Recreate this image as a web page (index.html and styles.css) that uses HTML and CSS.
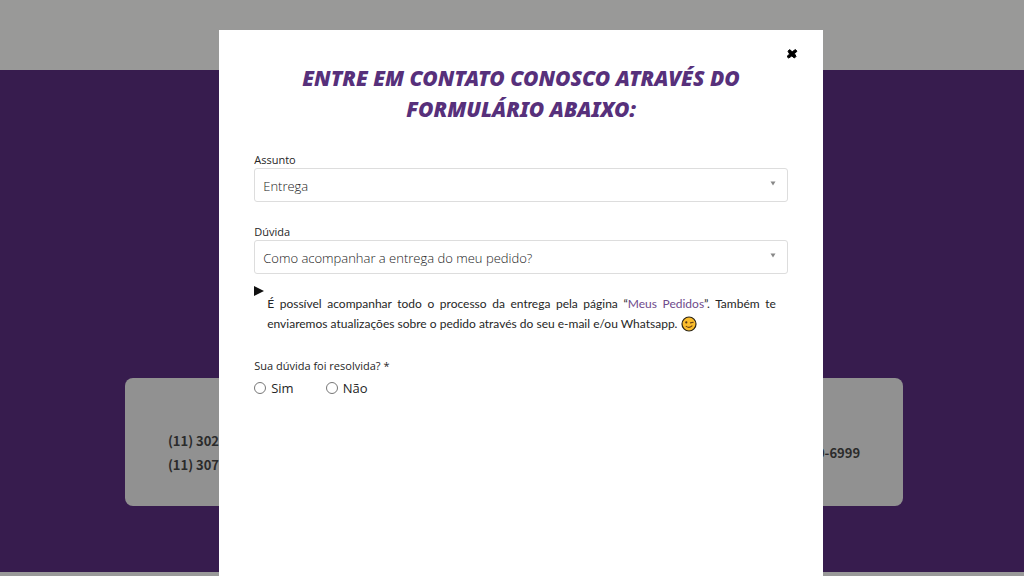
FILE: index.html
```html
<!DOCTYPE html>
<html lang="pt-BR">
<head>
<meta charset="utf-8">
<meta name="viewport" content="width=device-width, initial-scale=1">
<title>Fale conosco</title>
<link rel="stylesheet" href="styles.css">
</head>
<body>
<div class="page">
  <header class="page-top"></header>
  <main class="hero">
    <section class="phones">
      <div class="phone-list">
        <span>(11) 3028</span>
        <span>(11) 3070</span>
      </div>
      <div class="phone-list">
        <span>0-6999</span>
      </div>
    </section>
  </main>
</div>
<div class="overlay">
  <section class="modal" role="dialog" aria-modal="true" aria-labelledby="title">
    <button class="close" type="button" aria-label="Fechar">
      <svg viewBox="0 0 12 12" width="12" height="12"><path d="M3.6 1.6 L6.2 3.8 L9.3 1.6 L11 3.2 L8.5 5.7 L10 8.4 L8.4 10 L5.8 8 L2.6 10 L1 8.5 L3.6 6 L2 3.2Z" stroke="#000" stroke-width="1" stroke-linejoin="round"/></svg>
    </button>
    <h1 class="title" id="title">ENTRE EM CONTATO CONOSCO ATRAVÉS DO FORMULÁRIO ABAIXO:</h1>
    <form class="form">
      <div class="field">
        <label class="label" for="assunto">Assunto</label>
        <div class="select-box">
          <select class="select" id="assunto"><option>Entrega</option></select>
          <svg class="arrow" viewBox="0 0 6 5" width="6" height="5"><path d="M0.5 0.5H5.5L3 4.5Z"/></svg>
        </div>
      </div>
      <div class="field">
        <label class="label" for="duvida">Dúvida</label>
        <div class="select-box">
          <select class="select" id="duvida"><option>Como acompanhar a entrega do meu pedido?</option></select>
          <svg class="arrow" viewBox="0 0 6 5" width="6" height="5"><path d="M0.5 0.5H5.5L3 4.5Z"/></svg>
        </div>
      </div>
      <div class="answer">
        <svg class="marker" viewBox="0 0 10 10" width="10" height="10"><path d="M0 0L10 5L0 10Z"/></svg>
        <p class="answer-text">É possível acompanhar todo o processo da entrega pela página “<a class="link" href="#pedidos">Meus Pedidos</a>”. Também te enviaremos atualizações sobre o pedido através do seu e-mail e/ou Whatsapp. <svg class="emoji" role="img" aria-label="Piscando" viewBox="0 0 16 16" width="16" height="16"><circle cx="8" cy="8" r="7" fill="#fbbd2c" stroke="#2b2415" stroke-width="1.2"/><circle cx="5.3" cy="6.4" r="1.1" fill="#5b3510"/><path d="M9.4 6.9L12.2 6.3M5.2 10.4Q8.2 12.6 11 9.8" fill="none" stroke="#6b4012" stroke-width="1.1" stroke-linecap="round"/></svg></p>
      </div>
      <fieldset class="solved">
        <legend class="label">Sua dúvida foi resolvida? *</legend>
        <div class="choices">
          <label class="choice"><input class="radio" type="radio" name="resolvida">Sim</label>
          <label class="choice"><input class="radio" type="radio" name="resolvida">Não</label>
        </div>
      </fieldset>
    </form>
  </section>
</div>
</body>
</html>
```
FILE: styles.css
```css
* { box-sizing: border-box; }
html, body { height: 100%; }
body {
  margin: 0;
  overflow: hidden;
  background: #999;
  color: #262626;
  font-family: "Open Sans", sans-serif;
}
.page { min-height: 100%; display: flex; flex-direction: column; }
.page-top { height: 70px; background: #999998; }
.hero {
  flex: 1;
  display: flex;
  flex-direction: column;
  justify-content: flex-end;
  align-items: center;
  margin-bottom: 4px;
  padding: 0 0 66px 4px;
  background: #371c4e;
}
.phones {
  display: flex;
  justify-content: space-between;
  align-items: center;
  width: 76vw;
  padding: 51px 43px 29px;
  border-radius: 8px;
  background: #919191;
}
.phone-list {
  display: flex;
  flex-direction: column;
  color: #2b2b2b;
  font: 700 13px/24px "Noto Sans CJK KR", sans-serif;
}
.overlay {
  position: fixed;
  inset: 0;
  display: flex;
  justify-content: center;
  padding: 30px 0 0 18px;
}
.modal {
  position: relative;
  width: 60%;
  padding: 33px 35px;
  background: #fff;
}
.close {
  position: absolute;
  top: 18px;
  right: 25px;
  display: flex;
  padding: 0;
  border: 0;
  background: none;
  cursor: pointer;
}
.title {
  margin: 0 40px 28px;
  color: #57307b;
  font: italic 900 21px/31px "Noto Sans", sans-serif;
  text-align: center;
}
.field { margin-bottom: 23px; }
.label {
  display: block;
  padding: 0;
  font-size: 11px;
  line-height: 13px;
}
.field .label { margin-bottom: 2px; }
.select-box { position: relative; }
.select {
  display: block;
  appearance: none;
  width: 100%;
  height: 34px;
  padding: 2px 28px 0 8px;
  border: 1px solid #ddd;
  border-radius: 3px;
  background: #fff;
  color: #222;
  font: 300 13px "Open Sans", sans-serif;
}
.arrow {
  position: absolute;
  top: 13px;
  right: 12px;
  fill: #888;
  pointer-events: none;
}
.answer { margin: -11px 0 25px; }
.marker { display: block; fill: #111; }
.answer-text {
  margin: -2px 12px 0 13px;
  font: 12px/20px Lato, sans-serif;
  text-align: justify;
}
.link { color: #6f4b8c; text-decoration: none; }
.emoji { vertical-align: -4px; }
.solved { margin: 0; padding: 0; border: 0; }
.choices { display: flex; gap: 32px; margin-top: 6px; }
.choice {
  display: flex;
  align-items: center;
  gap: 5px;
  font-size: 13px;
  line-height: 20px;
}
.radio {
  appearance: none;
  width: 12px;
  height: 12px;
  margin: 0;
  border: 1px solid #777;
  border-radius: 50%;
  background: #fff;
}
.radio:checked { background: #57307b; box-shadow: inset 0 0 0 2px #fff; }
```
